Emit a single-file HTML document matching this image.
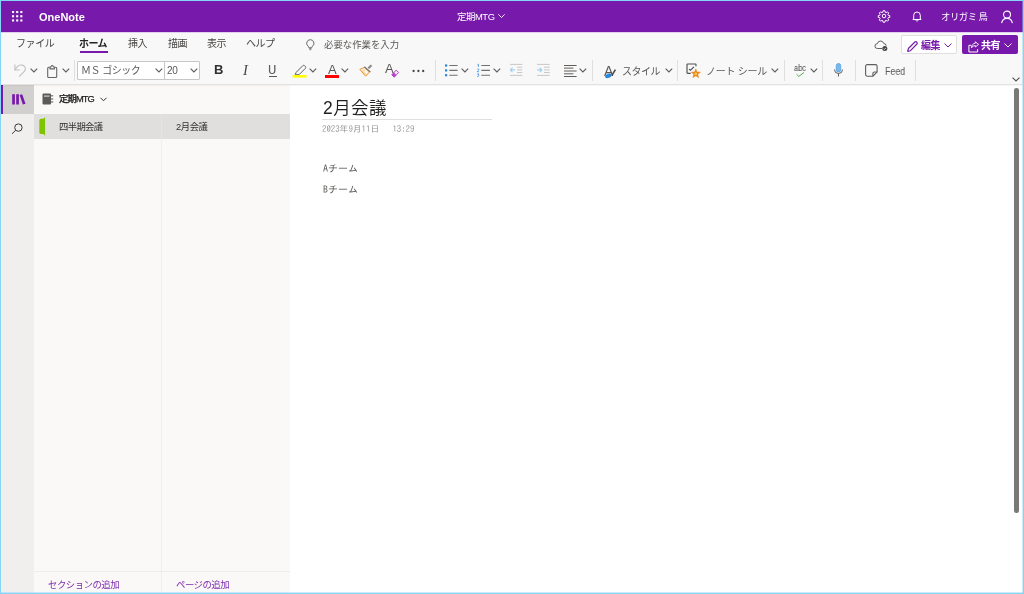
<!DOCTYPE html>
<html lang="ja">
<head>
<meta charset="utf-8">
<title>OneNote</title>
<style>
*{box-sizing:border-box;margin:0;padding:0}
html,body{width:1024px;height:594px;overflow:hidden;background:#84d5f8}
body{font-family:"Liberation Sans","Noto Sans CJK JP",sans-serif;color:#323130;font-size:11px;position:relative}
.abs{position:absolute}
#app{position:absolute;left:1px;top:1px;width:1022px;height:592px;background:#fff;overflow:hidden}
#hdr{position:absolute;z-index:2;left:0;top:0;width:1022px;height:31.250px;background:#7719aa;color:#fff}
#ribbon{position:absolute;left:0;top:31px;width:1022px;height:52px;background:#f8f8f8}
#ribline{position:absolute;left:0;top:83px;width:1022px;height:1px;background:#e4e3e2}
#rail{position:absolute;left:0;top:84px;width:33px;height:508px;background:#f0efee}
#nav{position:absolute;left:33px;top:84px;width:256px;height:508px;background:#faf9f8}
#page{position:absolute;left:289px;top:84px;width:733px;height:508px;background:#fff}
.t{position:absolute;white-space:nowrap;line-height:1;will-change:transform}
.tab{font-size:10px;color:#484644}
.gothic{font-family:"IPAGothic","Liberation Mono","Noto Sans CJK JP",monospace}
svg{position:absolute;overflow:visible}
.sep{position:absolute;width:1px;background:#e1dfdd}
</style>
</head>
<body>
<div id="app">
  <!-- header -->
  <div id="hdr">
    <svg style="left:10.800px;top:9.500px" width="12" height="12" viewBox="0 0 12 12" fill="#fff"><rect x="0" y="0" width="2.100" height="2.100"/><rect x="4.15" y="0" width="2.100" height="2.100"/><rect x="8.3" y="0" width="2.100" height="2.100"/><rect x="0" y="4.2" width="2.100" height="2.100"/><rect x="4.15" y="4.2" width="2.100" height="2.100"/><rect x="8.3" y="4.2" width="2.100" height="2.100"/><rect x="0" y="8.4" width="2.100" height="2.100"/><rect x="4.15" y="8.4" width="2.100" height="2.100"/><rect x="8.3" y="8.4" width="2.100" height="2.100"/></svg>
    <div class="t" style="left:38px;top:11px;font-size:11px;font-weight:bold;">OneNote</div>
    <div class="t" style="left:455.500px;top:11px;font-size:9.4px;letter-spacing:-.4px">定期MTG</div>
    <div class="t" style="left:940px;top:11px;font-size:9.4px;letter-spacing:-.5px">オリガミ 鳥</div>
    <svg style="left:497px;top:13px" width="7" height="4" viewBox="0 0 7 4" fill="none" stroke="#fff" stroke-width=".9"><path d="M.3.300l3.200 3.200L6.700.3"/></svg>
    <!-- gear -->
    <svg style="left:877px;top:9px" width="12" height="12" viewBox="0 0 24 24" fill="none" stroke="#fff" stroke-width="2">
      <circle cx="12" cy="12" r="3.600"/>
      <path d="M10.200 1.500h3.600l.6 3 1.900.8 2.500-1.700 2.600 2.600-1.700 2.500.8 1.900 3 .6v3.600l-3 .6-.8 1.900 1.700 2.500-2.600 2.600-2.500-1.700-1.900.8-.6 3h-3.600l-.6-3-1.900-.8-2.500 1.700-2.600-2.600 1.700-2.500-.8-1.900-3-.6v-3.600l3-.6.8-1.900L2.600 6.200l2.600-2.600 2.500 1.700 1.900-.8z" stroke-linejoin="round"/>
    </svg>
    <!-- bell -->
    <svg style="left:911px;top:10px" width="10" height="11" viewBox="0 0 10 11" fill="none" stroke="#fff" stroke-width="1">
      <path d="M1.700 8V4.300a3.300 3.300 0 0 1 6.600 0V8l.9.500H.8z" stroke-linejoin="round"/>
      <path d="M3.800 9.300a1.300 1.300 0 0 0 2.400 0"/>
    </svg>
    <!-- person -->
    <svg style="left:1000px;top:9px" width="12" height="14" viewBox="0 0 12 14" fill="none" stroke="#fff" stroke-width="1.100">
      <circle cx="6" cy="4.600" r="3.500"/>
      <path d="M.6 13.200C1.200 10 3.300 8.400 6 8.400s4.800 1.600 5.400 4.800"/>
    </svg>
  </div>

  <!-- ribbon -->
  <div id="ribbon">
    <div class="abs" style="left:0;top:0;width:1022px;height:1px;background:#e2cfee"></div>
    <div class="t tab" style="left:14.5px;top:7px;letter-spacing:-.4px">ファイル</div>
    <div class="t tab" style="left:78px;top:7px;font-weight:bold;color:#252423;letter-spacing:-.6px">ホーム</div>
    <div class="abs" style="left:78.500px;top:19.200px;width:28.300px;height:2.300px;background:#7719aa"></div>
    <div class="t tab" style="left:127px;top:7px;letter-spacing:-.4px">挿入</div>
    <div class="t tab" style="left:167px;top:7px;letter-spacing:-.6px">描画</div>
    <div class="t tab" style="left:206px;top:7px;letter-spacing:-.4px">表示</div>
    <div class="t tab" style="left:245px;top:7px;letter-spacing:-.5px">ヘルプ</div>
    <!-- bulb -->
    <svg style="left:304.500px;top:7px" width="9" height="12" viewBox="0 0 9 12" fill="none" stroke="#6a6866" stroke-width="1">
      <path d="M4.300.7a3.600 3.600 0 0 1 2.300 6.400c-.5.500-.8 1-.9 1.700h-2.800c-.1-.7-.4-1.200-.9-1.700A3.600 3.600 0 0 1 4.300.7z"/>
      <path d="M3.100 9.900h2.400" stroke-width="1.100"/><path d="M3.700 10.800h1.200" stroke-width=".8"/>
    </svg>
    <div class="t" style="left:323px;top:8px;font-size:9.4px;color:#5a5856">必要な作業を入力</div>

    <!-- right buttons -->
    <svg style="left:873px;top:8.700px" width="14" height="11" viewBox="0 0 14 11" fill="none" stroke="#605e5c" stroke-width="1">
      <path d="M8 7.500H3.400A2.400 2.400 0 0 1 3.300 2.700 3.300 3.300 0 0 1 9.700 2.400 2.600 2.600 0 0 1 12.200 4.700"/>
      <circle cx="10.800" cy="7.600" r="2.500" fill="#484644" stroke="none"/>
      <path d="M9.700 7.600l.8.800 1.400-1.500" stroke="#fff" stroke-width=".7"/>
    </svg>
    <div class="abs" style="left:900px;top:3.400px;width:56px;height:18.400px;background:#fff;border:1px solid #e1dfdd;border-radius:2px"></div>
    <svg style="left:906px;top:8.500px" width="11" height="11" viewBox="0 0 11 11" fill="none" stroke="#7719aa" stroke-width="1.150">
      <path d="M.7 10.400l.7-2.900L7.900 1a1.200 1.200 0 0 1 1.700 0l.3.300a1.200 1.200 0 0 1 0 1.700L3.500 9.700z" stroke-linejoin="round"/>
    </svg>
    <div class="t" style="left:920px;top:8.500px;font-size:10px;font-weight:bold;color:#7719aa;letter-spacing:-.5px">編集</div>
    <svg style="left:943px;top:10.500px" width="8" height="5" viewBox="0 0 8 5" fill="none" stroke="#7719aa" stroke-width="1"><path d="M.5.500l3.500 3.500L7.500.5"/></svg>
    <div class="abs" style="left:961px;top:3.400px;width:55.500px;height:18.400px;background:#7719aa;border-radius:2px"></div>
    <svg style="left:966.500px;top:8.500px" width="12" height="12" viewBox="0 0 12 12" fill="none" stroke="#fff" stroke-width="1">
      <path d="M3.200 4.300H.9v6.700h8.700V8.200"/>
      <path d="M7.300.8L10.600 3.400L7.300 6V4.600C5.600 4.600 4.300 5.300 3.400 7C3.500 4.400 4.900 2.500 7.300 2.200Z" stroke-linejoin="round" stroke-width=".9"/>
    </svg>
    <div class="t" style="left:980.300px;top:8.500px;font-size:10px;font-weight:bold;color:#fff;letter-spacing:-.5px">共有</div>
    <svg style="left:1003.300px;top:10.500px" width="8" height="5" viewBox="0 0 8 5" fill="none" stroke="#fff" stroke-width="1"><path d="M.5.500l3.500 3.500L7.500.5"/></svg>

    <!-- toolbar row; y offset: page_y-32 -->
    <!-- undo -->
    <svg style="left:13px;top:32px" width="13" height="13" viewBox="0 0 13 13" fill="none" stroke="#c2c0be" stroke-width="1.100">
      <path d="M.9.400V6H5.700"/><path d="M1 5.900C2.500 2.600 5.500.3 8.300 1.100C11.300 2 12.300 5 10.500 7.200L5.100 12.600"/>
    </svg>
    <svg class="chev" style="left:28.5px;top:36.300px" width="8" height="5" viewBox="0 0 8 5" fill="none" stroke="#5d5b59" stroke-width="1.100"><path d="M.6.600l3.300 3.300L7.200.6"/></svg>
    <!-- clipboard -->
    <svg style="left:46px;top:32.500px" width="11" height="13" viewBox="0 0 11 13" fill="none" stroke="#676563" stroke-width="1.100">
      <path d="M3 2.300H1.700a1 1 0 0 0-1 1v8.200a1 1 0 0 0 1 1h7a1 1 0 0 0 1-1V3.300a1 1 0 0 0-1-1H7.400"/>
      <path d="M3 3.900V2.500L4.200 1.300a1.100 1.100 0 0 1 2 0L7.400 2.500V3.900z" stroke-linejoin="round"/>
    </svg>
    <svg class="chev" style="left:60.6px;top:36.300px" width="8" height="5" viewBox="0 0 8 5" fill="none" stroke="#5d5b59" stroke-width="1.100"><path d="M.6.600l3.300 3.300L7.200.6"/></svg>
    <div class="sep" style="left:73.1px;top:28px;height:21px"></div>
    <!-- font box -->
    <div class="abs" style="left:76px;top:29px;width:123px;height:19px;background:#fff;border:1px solid #c8c6c4;border-radius:1px"></div>
    <div class="abs" style="left:163px;top:30px;width:1px;height:17px;background:#c8c6c4"></div>
    <div class="t" style="left:80px;top:34px;font-size:10px;color:#5a5856;letter-spacing:-.5px">ＭＳ ゴシック</div>
    <svg class="chev" style="left:154.1px;top:36.300px" width="8" height="5" viewBox="0 0 8 5" fill="none" stroke="#5d5b59" stroke-width="1.100"><path d="M.6.600l3.300 3.300L7.200.6"/></svg>
    <div class="t" style="left:166px;top:34px;font-size:10px;color:#5a5856;letter-spacing:-.2px">20</div>
    <svg class="chev" style="left:189.1px;top:36.300px" width="8" height="5" viewBox="0 0 8 5" fill="none" stroke="#5d5b59" stroke-width="1.100"><path d="M.6.600l3.300 3.300L7.200.6"/></svg>
    <!-- B I U -->
    <div class="t" style="left:213px;top:31px;font-size:13px;font-weight:bold;color:#323130">B</div>
    <div class="t" style="left:241.500px;top:30.500px;font-size:14.500px;font-style:italic;color:#484644;font-family:'Liberation Serif',serif">I</div>
    <div class="t" style="left:267px;top:31px;font-size:13px;color:#484644;transform:scaleX(.88);transform-origin:0 0">U</div>
    <div class="abs" style="left:268px;top:44px;width:8px;height:1px;background:#5a5856"></div>
    <!-- highlighter -->
    <svg style="left:291px;top:32px" width="15" height="14" viewBox="0 0 15 14" fill="none" stroke="#605e5c" stroke-width="1">
      <path d="M3.200 10.700L4.200 8.300L10.800 1.700a1.300 1.300 0 0 1 1.800 0l.8.800a1.300 1.300 0 0 1 0 1.800L7 10.700z" stroke-linejoin="round"/>
      <rect x=".6" y="11" width="14" height="2.600" fill="#ffff00" stroke="none"/>
    </svg>
    <svg class="chev" style="left:308px;top:36.300px" width="8" height="5" viewBox="0 0 8 5" fill="none" stroke="#5d5b59" stroke-width="1.100"><path d="M.6.600l3.300 3.300L7.200.6"/></svg>
    <!-- font color -->
    <div class="t" style="left:326.500px;top:31px;font-size:13px;font-weight:400;color:#5a5856;font-family:'Liberation Sans',sans-serif;line-height:13px">A</div>
    <div class="abs" style="left:324px;top:42.500px;width:14px;height:3px;background:#ff0000"></div>
    <svg class="chev" style="left:340px;top:36.300px" width="8" height="5" viewBox="0 0 8 5" fill="none" stroke="#5d5b59" stroke-width="1.100"><path d="M.6.600l3.300 3.300L7.200.6"/></svg>
    <!-- format painter -->
    <svg style="left:357.900px;top:31.800px" width="14" height="13" viewBox="0 0 14 13" fill="none">
      <path d="M.8 5.300L5.300 3.500L10.600 8L6.600 12.200z" fill="#fff3e0" stroke="#e8912d" stroke-width="1" stroke-linejoin="round"/>
      <path d="M2.500 6.500L7.500 10.800M4 5.500L6 7.200" stroke="#f2b366" stroke-width=".8"/>
      <path d="M5.300 2.800L11.300 8" stroke="#7a7876" stroke-width="1.300"/>
      <path d="M9.300 4.300L12.500 1.200" stroke="#8a8886" stroke-width="2"/>
    </svg>
    <!-- clear formatting -->
    <div class="t" style="left:384px;top:30px;font-size:13px;font-weight:400;color:#5a5856;font-family:'Liberation Sans',sans-serif;line-height:13px">A</div>
    <svg style="left:388.800px;top:36.600px" width="9" height="9" viewBox="0 0 10 10" fill="none">
      <path d="M7 1.200L9.600 3.900L4.700 9.100L2 6.400z" fill="#f6e6f9" stroke="#b146c2" stroke-width="1.100" stroke-linejoin="round"/>
      <path d="M4.300 4L7 6.700L4.700 9.100L2 6.400z" fill="#b146c2"/>
    </svg>
    <!-- more -->
    <svg style="left:411px;top:37px" width="14" height="4" viewBox="0 0 14 4" fill="#484644"><circle cx="1.600" cy="2" r="1.150"/><circle cx="6.400" cy="2" r="1.150"/><circle cx="11.200" cy="2" r="1.150"/></svg>
    <div class="sep" style="left:433.9px;top:28px;height:21px"></div>
    <!-- bullets -->
    <svg style="left:444px;top:32px" width="14" height="13" viewBox="0 0 14 13" fill="none">
      <rect x="0" y=".4" width="2.200" height="2.200" fill="#2b88d8"/><rect x="0" y="5.300" width="2.200" height="2.200" fill="#2b88d8"/><rect x="0" y="10.100" width="2.200" height="2.200" fill="#2b88d8"/>
      <path d="M4.300 1.500h8.300M4.300 6.400h8.300M4.300 11.200h8.300" stroke="#72706e" stroke-width="1.100"/>
    </svg>
    <svg class="chev" style="left:459.75px;top:36.300px" width="8" height="5" viewBox="0 0 8 5" fill="none" stroke="#5d5b59" stroke-width="1.100"><path d="M.6.600l3.300 3.300L7.200.6"/></svg>
    <!-- numbering -->
    <svg style="left:476px;top:32px" width="14" height="13" viewBox="0 0 14 13" fill="none">
      <path d="M.5.700L1.400.1V3M.3 5.300c.4-.6 1.600-.5 1.600.3S.3 6.900.3 7.700H2M.3 9.900h1.500L.9 11c1.300 0 1.300 1.600-.6 1.500" stroke="#2b88d8" stroke-width=".75"/>
      <path d="M4.300 1.500h8.700M4.300 6.400h8.700M4.300 11.200h8.700" stroke="#72706e" stroke-width="1.100"/>
    </svg>
    <svg class="chev" style="left:491.85px;top:36.300px" width="8" height="5" viewBox="0 0 8 5" fill="none" stroke="#5d5b59" stroke-width="1.100"><path d="M.6.600l3.300 3.300L7.200.6"/></svg>
    <!-- outdent -->
    <svg style="left:509px;top:32px" width="13" height="12" viewBox="0 0 13 12" fill="none">
      <path d="M0 .4h12.300M7 3.200h5.300M7 5.900h5.300M7 8.500h5.300M0 11.400h12.300" stroke="#c9c7c5" stroke-width="1"/>
      <path d="M5 5.900H.6M2.500 3.700L.4 5.900l2.100 2.200" stroke="#9fd0f3" stroke-width="1.100"/>
    </svg>
    <!-- indent -->
    <svg style="left:536px;top:32px" width="13" height="12" viewBox="0 0 13 12" fill="none">
      <path d="M0 .4h12.700M7 3.200h5.700M7 5.900h5.700M7 8.500h5.700M0 11.400h12.700" stroke="#c9c7c5" stroke-width="1"/>
      <path d="M0 5.900h4.600M2.700 3.700l2.100 2.200-2.100 2.200" stroke="#9fd0f3" stroke-width="1.100"/>
    </svg>
    <!-- align -->
    <svg style="left:562.600px;top:32px" width="13" height="13" viewBox="0 0 13 13" fill="none">
      <path d="M0 1.500h12.600M0 4.100h9.400M0 7h12.600M0 9.800h9.400M0 12.500h12.600" stroke="#605e5c" stroke-width="1"/>
    </svg>
    <svg class="chev" style="left:578.4px;top:36.300px" width="8" height="5" viewBox="0 0 8 5" fill="none" stroke="#5d5b59" stroke-width="1.100"><path d="M.6.600l3.300 3.300L7.200.6"/></svg>
    <div class="sep" style="left:590.9px;top:28px;height:21px"></div>
    <!-- styles -->
    <div class="t" style="left:602.800px;top:31.500px;font-size:14px;font-weight:400;color:#5a5856;font-family:'Liberation Sans',sans-serif;line-height:14px">A</div>
    <svg style="left:600px;top:32px" width="16" height="15" viewBox="0 0 16 15" fill="none">
      <path d="M14.400 5.600L10.700 11.600" stroke="#504e4c" stroke-width="1.700"/>
      <ellipse cx="7.300" cy="11.900" rx="3.300" ry="2" transform="rotate(-22 7.300 11.900)" fill="#2b88d8"/>
    </svg>
    <div class="t" style="left:620.500px;top:34.800px;font-size:10px;color:#5a5856;letter-spacing:-.5px">スタイル</div>
    <svg class="chev" style="left:663.85px;top:36.300px" width="8" height="5" viewBox="0 0 8 5" fill="none" stroke="#5d5b59" stroke-width="1.100"><path d="M.6.600l3.300 3.300L7.200.6"/></svg>
    <div class="sep" style="left:675.9px;top:28px;height:21px"></div>
    <!-- tags -->
    <svg style="left:685.200px;top:30.800px" width="16" height="16" viewBox="0 0 16 16" fill="none">
      <path d="M4.700 10.300H1.700a.7.700 0 0 1-.7-.7V1.700a.7.700 0 0 1 .7-.7H9.300a.7.700 0 0 1 .7.700V3.300" stroke="#504e4c" stroke-width="1.150"/>
      <path d="M3 6.100L4.500 7.200L7.900 3.900" stroke="#504e4c" stroke-width="1.100"/>
      <path d="M9.800 5.800L11.0 9.0L14.500 9.200L11.800 11.300L12.700 14.700L9.800 12.800L6.900 14.700L7.800 11.300L5.100 9.200L8.600 9.0z" fill="#e8871a" stroke="#e8871a" stroke-width=".5" stroke-linejoin="round"/>
      <circle cx="9.800" cy="10.800" r="1.300" fill="#f9c75a"/>
    </svg>
    <div class="t" style="left:705.300px;top:34.800px;font-size:10px;color:#5a5856;letter-spacing:-.25px">ノート シール</div>
    <svg class="chev" style="left:769.7px;top:36.300px" width="8" height="5" viewBox="0 0 8 5" fill="none" stroke="#5d5b59" stroke-width="1.100"><path d="M.6.600l3.300 3.300L7.200.6"/></svg>
    <div class="sep" style="left:782.75px;top:28px;height:21px"></div>
    <!-- spell -->
    <div class="t" style="left:793px;top:31.500px;font-size:8.800px;color:#484644;transform:scaleX(.84);transform-origin:0 0">abc</div>
    <svg style="left:794.500px;top:39.700px" width="9" height="5" viewBox="0 0 9 5" fill="none" stroke="#4caf50" stroke-width="1"><path d="M.5 2.200l2.300 2.200L8 .5"/></svg>
    <svg class="chev" style="left:808.6px;top:36.300px" width="8" height="5" viewBox="0 0 8 5" fill="none" stroke="#5d5b59" stroke-width="1.100"><path d="M.6.600l3.300 3.300L7.200.6"/></svg>
    <div class="sep" style="left:820.5px;top:28px;height:21px"></div>
    <!-- mic -->
    <svg style="left:833px;top:31px" width="9" height="14" viewBox="0 0 9 14" fill="none">
      <rect x="2.300" y=".5" width="4.400" height="8.500" rx="2.200" fill="#7ab8ec" stroke="#4f9fe3" stroke-width=".8"/>
      <path d="M.5 6.500a4 4 0 0 0 8 0M4.500 10.500v3" stroke="#605e5c" stroke-width="1"/>
    </svg>
    <div class="sep" style="left:853.5px;top:28px;height:21px"></div>
    <!-- feed -->
    <svg style="left:864px;top:32.300px" width="13" height="13" viewBox="0 0 13 13" fill="none" stroke="#605e5c" stroke-width="1.100">
      <path d="M2.200.6h8.300a1.600 1.600 0 0 1 1.600 1.600v5.800l-4.200 4.200H2.200A1.600 1.600 0 0 1 .6 10.600V2.200A1.600 1.600 0 0 1 2.200.6z"/>
      <path d="M12.100 8H9.500A1.600 1.600 0 0 0 7.900 9.600v2.600"/>
    </svg>
    <div class="t" style="left:884px;top:35px;font-size:10.200px;color:#5a5856;transform:scaleX(.87);transform-origin:0 0">Feed</div>
    <div class="sep" style="left:913.9px;top:28px;height:21px"></div>
    <svg style="left:1011px;top:45px" width="8" height="5" viewBox="0 0 8 5" fill="none" stroke="#555351" stroke-width="1.150"><path d="M.5.600l3.500 3.400L7.500.6"/></svg>
  </div>
  <div id="ribline"></div>
  <div class="abs" style="left:0;top:84px;width:1022px;height:1px;background:rgba(0,0,0,.04);z-index:3"></div>

  <!-- rail -->
  <div id="rail">
    <div class="abs" style="left:0;top:0;width:33px;height:29px;background:#d2d0ce"></div>
    <div class="abs" style="left:0;top:0;width:2px;height:29px;background:#7719aa"></div>
    <svg style="left:11px;top:9px" width="14" height="11" viewBox="0 0 14 11" fill="#7719aa">
      <rect x="0.200" y="0.200" width="2.700" height="10.300"/><rect x="4.200" y="0.200" width="2.700" height="10.300"/>
      <path d="M7.600 1l2.600-.8 3.300 9.500-2.600.8z"/>
    </svg>
    <svg style="left:10px;top:38.300px" width="13" height="13" viewBox="0 0 13 13" fill="none" stroke="#3b3a39" stroke-width="1">
      <circle cx="7.400" cy="4.600" r="3.700"/><path d="M4.800 7.200L1 10.800"/>
    </svg>
  </div>

  <!-- nav -->
  <div id="nav">
    <div class="abs" style="left:0;top:29px;width:256px;height:25px;background:#e1dfdd"></div>
    <div class="abs" style="left:127px;top:29px;width:1px;height:479px;background:#f1efed"></div>
    <div class="abs" style="left:127px;top:29px;width:1px;height:25px;background:#e6e4e2"></div>
    <div class="abs" style="left:0;top:486.200px;width:256px;height:1px;background:#efedeb"></div>
    <svg style="left:7.500px;top:7.500px" width="12" height="12" viewBox="0 0 12 12" fill="none">
      <path d="M1.500.5h6.500a1 1 0 0 1 1 1v9a1 1 0 0 1-1 1H1.500a1 1 0 0 1-1-1v-9a1 1 0 0 1 1-1z" fill="#5d5b59"/>
      <rect x="2" y="2.500" width="5.500" height="1.200" fill="#d0cecc"/>
      <path d="M9 2.800h2.200M9 5.900h2.200M9 9h2.200" stroke="#8a8886" stroke-width="1.500"/>
    </svg>
    <svg style="left:66px;top:12px" width="7" height="5" viewBox="0 0 7 5" fill="none" stroke="#323130" stroke-width="1"><path d="M.5.800l3 3 3-3"/></svg>
    <svg style="left:5px;top:31px" width="7" height="19" viewBox="0 0 7 19" fill="#7fc400"><path d="M6.100 1.300V19.700L4.300 18.100H2Q.3 18.100 .3 16.400V4.500Q.3 2.800 2 2.800H4.300Z"/></svg>
    <div class="t" style="left:25px;top:10.300px;font-size:9.3px;font-weight:500;color:#201f1e;letter-spacing:-.85px;-webkit-text-stroke:.25px #201f1e;font-family:'Liberation Sans','Noto Sans CJK JP',sans-serif">定期MTG</div>
    <div class="t" style="left:25px;top:38px;font-size:9.3px;letter-spacing:-.6px">四半期会議</div>
    <div class="t" style="left:142px;top:38px;font-size:9.3px;letter-spacing:-.4px">2月会議</div>
    <div class="t" style="left:14px;top:494.5px;font-size:9.4px;color:#7f2bb0;letter-spacing:-.5px">セクションの追加</div>
    <div class="t" style="left:142px;top:494.5px;font-size:9.4px;color:#7f2bb0;letter-spacing:-.5px">ページの追加</div>
  </div>

  <!-- page -->
  <div id="page">
    <div class="t" style="left:33px;top:14.500px;font-size:17.500px;font-weight:350;letter-spacing:.4px;color:#201f1e;font-family:'Liberation Sans','Noto Sans CJK JP',sans-serif">2月会議</div>
    <div class="abs" style="left:32px;top:34px;width:170px;height:1px;background:#e1dfdd"></div>
    <div class="t gothic" style="left:32px;top:40px;font-size:8.8px;color:#979593">2023年9月11日&nbsp;&nbsp;&nbsp;13:29</div>
    <div class="t gothic" style="left:33px;top:78px;font-size:10px;color:#5a5856">Aチーム</div>
    <div class="t gothic" style="left:33px;top:99px;font-size:10px;color:#5a5856">Bチーム</div>
    <div class="abs" style="left:724px;top:3.300px;width:4.500px;height:425px;background:#7a7978;border-radius:2.300px"></div>
  </div>
  <div class="abs" style="right:0;top:0;width:1px;height:592px;background:rgba(132,213,248,.45);z-index:5"></div>
  <div class="abs" style="left:0;bottom:0;width:1022px;height:1px;background:rgba(132,213,248,.45);z-index:5"></div>
</div>
</body>
</html>
